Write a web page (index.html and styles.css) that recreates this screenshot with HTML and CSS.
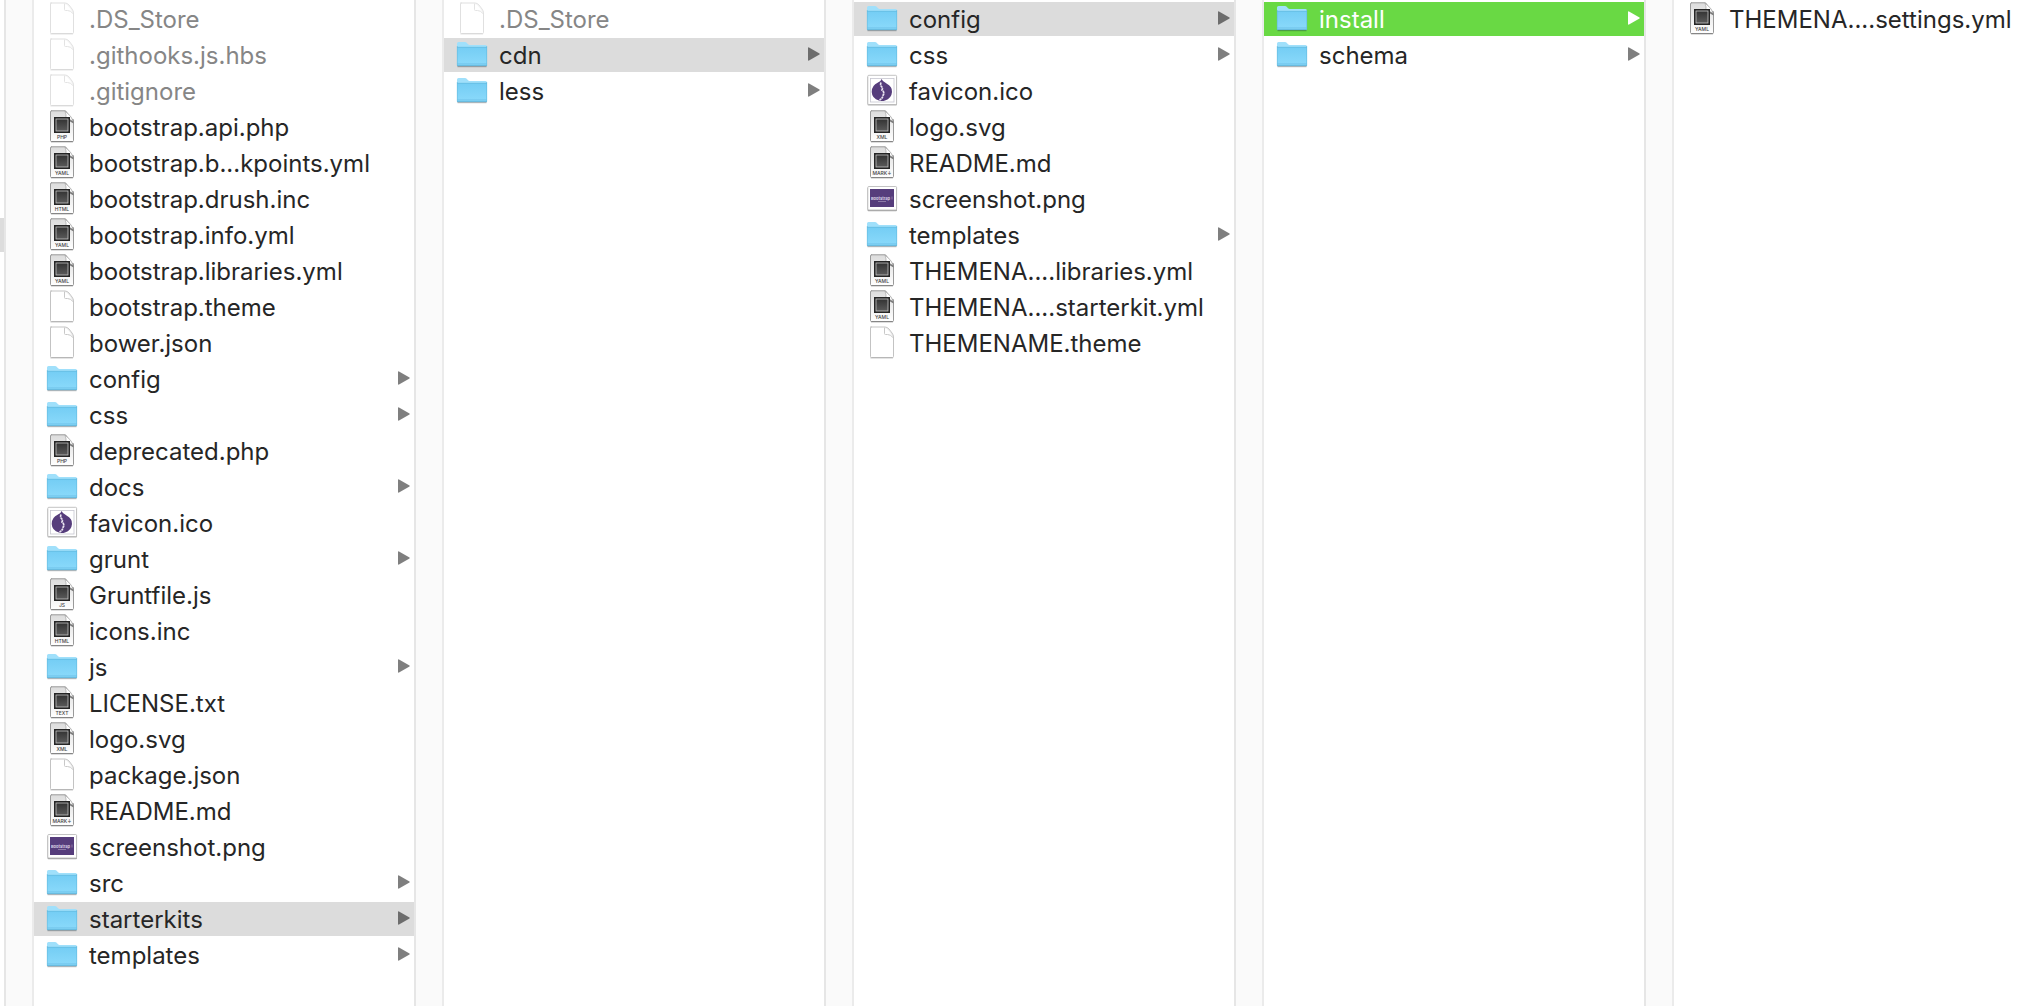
FILE: index.html
```html
<!DOCTYPE html>
<html lang="en">
<head>
  <meta charset="UTF-8">
  <meta name="viewport" content="width=device-width, initial-scale=1.0">
  <title>starterkits</title>
  <link rel="stylesheet" href="styles.css">
</head>
<body>
  <!-- Gradients -->
  <svg class="gradients" aria-hidden="true">
    <defs>
      <linearGradient id="folder-fill" x1="0" y1="0" x2="0" y2="1">
        <stop offset="0" stop-color="#74cdf4"/>
        <stop offset="1" stop-color="#8bdafb"/>
      </linearGradient>
      <linearGradient id="page-fill" x1="0" y1="0" x2="0" y2="1">
        <stop offset="0" stop-color="#dcdcdc"/>
        <stop offset="1" stop-color="#ffffff"/>
      </linearGradient>
      <linearGradient id="chip-fill" x1="0" y1="0" x2="0" y2="1">
        <stop offset="0" stop-color="#333333"/>
        <stop offset="1" stop-color="#5a5a5a"/>
      </linearGradient>
    </defs>
  </svg>

  <!-- Icon set -->
  <svg class="sprite" aria-hidden="true">
    <symbol id="folder" viewBox="0 0 32 34">
      <path d="M1.5 28.6h29" stroke="#000" stroke-opacity=".28" stroke-width="1.2"/>
      <path d="M1 27V5.5Q1 4 2.500 4H9q1 0 1.700.8L12 6.300q.7.700 1.700.7H29.500Q31 7 31 8.500V27q0 1-1 1H2q-1 0-1-1z" fill="#a0e0fb"/>
      <path d="M1 9h30v18q0 1-1 1H2q-1 0-1-1z" fill="url(#folder-fill)"/>
      <path d="M1 9.300h30M1.300 26h29.400" stroke="#62b9df" stroke-width=".7"/>
      <path d="M1 27.700h30" stroke="#57aace" stroke-width=".8"/>
      <path d="M1.300 8v19.500M30.700 8v19.500" stroke="#63b9de" stroke-width=".6"/>
    </symbol>
    <symbol id="blank" viewBox="0 0 32 34">
      <path d="M4.500 1h14.500q2 0 4 2l3 4q1.500 2 1.500 4v19.500q0 1-1 1h-21q-1 0-1-1V2q0-1 1-1z" fill="#fff" stroke="#c3c3c3"/>
      <path d="M4.500 31.900h22.500" stroke="#aaa" stroke-width=".8"/>
      <path d="M18.500 1.500v6q0 1 1 1h2q3 0 5.500 3" fill="#fff" stroke="#c8c8c8"/>
      <path d="M18.500 1.500q4 0 8.500 9" fill="none" stroke="#d5d5d5" stroke-width=".6"/>
    </symbol>
    <symbol id="page" viewBox="0 0 32 34">
      <path d="M5 .8h14.500l8 10v19.700q0 1-1 1h-21q-1 0-1-1V1.800q0-1 1-1z" fill="url(#page-fill)" stroke="#9a9a9a"/>
      <path d="M5 31.800h22" stroke="#777" stroke-width=".8"/>
      <path d="M20 9h7.500v4.500z" fill="#777"/>
      <path d="M19 1.200q1.500 3 1 7.800 4 0 7.300 2.300-2-6-8.300-10.100z" fill="#fff" stroke="#999" stroke-width=".6"/>
      <rect x="8" y="7" width="16" height="16" fill="#252525"/>
      <rect x="10" y="9" width="12" height="12" fill="url(#chip-fill)" stroke="#c4c4c4" stroke-width=".8"/>
    </symbol>
    <symbol id="php" viewBox="0 0 32 34"><use href="#page"/><text x="16" y="28.500" class="kind">PHP</text></symbol>
    <symbol id="yaml" viewBox="0 0 32 34"><use href="#page"/><text x="16" y="28.500" class="kind">YAML</text></symbol>
    <symbol id="html" viewBox="0 0 32 34"><use href="#page"/><text x="16" y="28.500" class="kind">HTML</text></symbol>
    <symbol id="js" viewBox="0 0 32 34"><use href="#page"/><text x="16" y="28.500" class="kind">JS</text></symbol>
    <symbol id="text" viewBox="0 0 32 34"><use href="#page"/><text x="16" y="28.500" class="kind">TEXT</text></symbol>
    <symbol id="xml" viewBox="0 0 32 34"><use href="#page"/><text x="16" y="28.500" class="kind">XML</text></symbol>
    <symbol id="mark" viewBox="0 0 32 34"><use href="#page"/><text x="16" y="28.500" class="kind">MARK↓</text></symbol>
    <symbol id="favicon" viewBox="0 0 32 34">
      <rect x="1.500" y="2.500" width="29.500" height="29" rx="1" fill="#000" opacity=".3"/>
      <rect x="1.800" y="1.300" width="28.800" height="29.200" rx="1" fill="#fff" stroke="#b4b4b4" stroke-width=".8"/>
      <rect x="4.500" y="4.500" width="23.500" height="23.500" fill="#fff" stroke="#c6c6d0" stroke-width=".8"/>
      <path d="M15.500 5q1 2.500 5 4.500 6 3 5.500 8.500-.5 6.500-7 8.500-3 1-6 0-7-2-7.300-8.500Q5.500 11.500 12 8.500q3-1 3.500-3.500z" fill="#563d7c"/>
      <path d="M15 8.500q-1 2.500.5 4t.5 3.500q3 2.500 1 5.500-.5 3-3.500 4.500" fill="none" stroke="#e9e4f0" stroke-width="1.700" stroke-dasharray="2.500 .5"/>
    </symbol>
    <symbol id="image" viewBox="0 0 32 34">
      <rect x="1.500" y="5.500" width="29.500" height="23.700" rx="1" fill="#000" opacity=".35"/>
      <rect x="1.800" y="4.500" width="28.800" height="23.500" rx="1" fill="#fff" stroke="#b4b4b4" stroke-width=".8"/>
      <rect x="4" y="7" width="24" height="18" fill="#563d7c"/>
      <text x="14.500" y="17.500" class="thumb">Bootstrap</text>
      <path d="M26 14.500v3M12 19.500h8" stroke="#9a8ab3" stroke-width=".8"/>
    </symbol>
    <symbol id="arrow" viewBox="0 0 12 14">
      <path d="M1 .5 11.500 6.500q.5.500 0 1L1 13.500q-1 .5-1-.5V1q0-1 1-.5z" fill="currentColor"/>
    </symbol>
  </svg>

  <main class="browser">
    <div class="edge"><div class="edge-row"></div></div>
    <div class="divider"></div>

    <ul class="column">
      <li><button class="row dim"><svg class="icon"><use href="#blank"/></svg><span class="name">.DS_Store</span></button></li>
      <li><button class="row dim"><svg class="icon"><use href="#blank"/></svg><span class="name">.githooks.js.hbs</span></button></li>
      <li><button class="row dim"><svg class="icon"><use href="#blank"/></svg><span class="name">.gitignore</span></button></li>
      <li><button class="row"><svg class="icon"><use href="#php"/></svg><span class="name">bootstrap.api.php</span></button></li>
      <li><button class="row"><svg class="icon"><use href="#yaml"/></svg><span class="name">bootstrap.b...kpoints.yml</span></button></li>
      <li><button class="row"><svg class="icon"><use href="#html"/></svg><span class="name">bootstrap.drush.inc</span></button></li>
      <li><button class="row"><svg class="icon"><use href="#yaml"/></svg><span class="name">bootstrap.info.yml</span></button></li>
      <li><button class="row"><svg class="icon"><use href="#yaml"/></svg><span class="name">bootstrap.libraries.yml</span></button></li>
      <li><button class="row"><svg class="icon"><use href="#blank"/></svg><span class="name">bootstrap.theme</span></button></li>
      <li><button class="row"><svg class="icon"><use href="#blank"/></svg><span class="name">bower.json</span></button></li>
      <li><button class="row"><svg class="icon"><use href="#folder"/></svg><span class="name">config</span><svg class="arrow"><use href="#arrow"/></svg></button></li>
      <li><button class="row"><svg class="icon"><use href="#folder"/></svg><span class="name">css</span><svg class="arrow"><use href="#arrow"/></svg></button></li>
      <li><button class="row"><svg class="icon"><use href="#php"/></svg><span class="name">deprecated.php</span></button></li>
      <li><button class="row"><svg class="icon"><use href="#folder"/></svg><span class="name">docs</span><svg class="arrow"><use href="#arrow"/></svg></button></li>
      <li><button class="row"><svg class="icon"><use href="#favicon"/></svg><span class="name">favicon.ico</span></button></li>
      <li><button class="row"><svg class="icon"><use href="#folder"/></svg><span class="name">grunt</span><svg class="arrow"><use href="#arrow"/></svg></button></li>
      <li><button class="row"><svg class="icon"><use href="#js"/></svg><span class="name">Gruntfile.js</span></button></li>
      <li><button class="row"><svg class="icon"><use href="#html"/></svg><span class="name">icons.inc</span></button></li>
      <li><button class="row"><svg class="icon"><use href="#folder"/></svg><span class="name">js</span><svg class="arrow"><use href="#arrow"/></svg></button></li>
      <li><button class="row"><svg class="icon"><use href="#text"/></svg><span class="name">LICENSE.txt</span></button></li>
      <li><button class="row"><svg class="icon"><use href="#xml"/></svg><span class="name">logo.svg</span></button></li>
      <li><button class="row"><svg class="icon"><use href="#blank"/></svg><span class="name">package.json</span></button></li>
      <li><button class="row"><svg class="icon"><use href="#mark"/></svg><span class="name">README.md</span></button></li>
      <li><button class="row"><svg class="icon"><use href="#image"/></svg><span class="name">screenshot.png</span></button></li>
      <li><button class="row"><svg class="icon"><use href="#folder"/></svg><span class="name">src</span><svg class="arrow"><use href="#arrow"/></svg></button></li>
      <li><button class="row selected"><svg class="icon"><use href="#folder"/></svg><span class="name">starterkits</span><svg class="arrow"><use href="#arrow"/></svg></button></li>
      <li><button class="row"><svg class="icon"><use href="#folder"/></svg><span class="name">templates</span><svg class="arrow"><use href="#arrow"/></svg></button></li>
    </ul>
    <div class="divider"></div>

    <ul class="column">
      <li><button class="row dim"><svg class="icon"><use href="#blank"/></svg><span class="name">.DS_Store</span></button></li>
      <li><button class="row selected"><svg class="icon"><use href="#folder"/></svg><span class="name">cdn</span><svg class="arrow"><use href="#arrow"/></svg></button></li>
      <li><button class="row"><svg class="icon"><use href="#folder"/></svg><span class="name">less</span><svg class="arrow"><use href="#arrow"/></svg></button></li>
    </ul>
    <div class="divider"></div>

    <ul class="column">
      <li><button class="row selected"><svg class="icon"><use href="#folder"/></svg><span class="name">config</span><svg class="arrow"><use href="#arrow"/></svg></button></li>
      <li><button class="row"><svg class="icon"><use href="#folder"/></svg><span class="name">css</span><svg class="arrow"><use href="#arrow"/></svg></button></li>
      <li><button class="row"><svg class="icon"><use href="#favicon"/></svg><span class="name">favicon.ico</span></button></li>
      <li><button class="row"><svg class="icon"><use href="#xml"/></svg><span class="name">logo.svg</span></button></li>
      <li><button class="row"><svg class="icon"><use href="#mark"/></svg><span class="name">README.md</span></button></li>
      <li><button class="row"><svg class="icon"><use href="#image"/></svg><span class="name">screenshot.png</span></button></li>
      <li><button class="row"><svg class="icon"><use href="#folder"/></svg><span class="name">templates</span><svg class="arrow"><use href="#arrow"/></svg></button></li>
      <li><button class="row"><svg class="icon"><use href="#yaml"/></svg><span class="name">THEMENA....libraries.yml</span></button></li>
      <li><button class="row"><svg class="icon"><use href="#yaml"/></svg><span class="name">THEMENA....starterkit.yml</span></button></li>
      <li><button class="row"><svg class="icon"><use href="#blank"/></svg><span class="name">THEMENAME.theme</span></button></li>
    </ul>
    <div class="divider"></div>

    <ul class="column">
      <li><button class="row active"><svg class="icon"><use href="#folder"/></svg><span class="name">install</span><svg class="arrow"><use href="#arrow"/></svg></button></li>
      <li><button class="row"><svg class="icon"><use href="#folder"/></svg><span class="name">schema</span><svg class="arrow"><use href="#arrow"/></svg></button></li>
    </ul>
    <div class="divider"></div>

    <ul class="column last">
      <li><button class="row"><svg class="icon"><use href="#yaml"/></svg><span class="name">THEMENA....settings.yml</span></button></li>
    </ul>
  </main>
</body>
</html>
```
FILE: styles.css
```css
* {
  box-sizing: border-box;
}
body {
  margin: 0;
  background-color: #fff;
  color: #262626;
  font-family: Inter, "Liberation Sans", sans-serif;
  font-size: 24px;
}
/* not display: none, or the gradients stop working */
.gradients {
  position: absolute;
  width: 0;
  height: 0;
}
.sprite {
  display: none;
}
.browser {
  display: flex;
  min-height: 100vh;
}
.edge {
  flex: none;
  width: 4px;
  padding-top: 218px;
}
.edge-row {
  height: 34px;
  background-color: #dcdcdc;
}
.divider {
  flex: none;
  width: 30px;
  background-color: #fafafa;
  border-left: 2px solid #e6e6e6;
  border-right: 2px solid #ebebeb;
}
.column {
  flex: 380 1 0;
  min-width: 0;
  margin: 0;
  padding: 2px 0;
  list-style: none;
  display: flex;
  flex-direction: column;
  gap: 2px;
}
.column.last {
  flex-grow: 356;
}
.row {
  display: flex;
  align-items: center;
  width: 100%;
  height: 34px;
  padding: 0 4px 0 12px;
  border: none;
  background: none;
  color: inherit;
  font: inherit;
  text-align: left;
}
.icon {
  flex: none;
  width: 32px;
  height: 34px;
  margin-right: 11px;
}
.name {
  flex: 1;
  min-width: 0;
  white-space: nowrap;
}
.arrow {
  flex: none;
  width: 12px;
  height: 14px;
  margin-bottom: 2px;
  color: #7f7f7f;
}
.dim {
  color: #868686;
}
.dim .icon {
  opacity: 0.5;
}
.selected {
  background-color: #dcdcdc;
}
.selected .arrow {
  color: #6d6d6d;
}
.active {
  background-color: #69d944;
  color: #fff;
}
.active .arrow {
  color: #fff;
}
.kind {
  font-size: 5px;
  font-weight: 500;
  fill: #444;
  text-anchor: middle;
}
.thumb {
  font-size: 4px;
  font-weight: 700;
  fill: #d8d0e4;
  text-anchor: middle;
}
```
